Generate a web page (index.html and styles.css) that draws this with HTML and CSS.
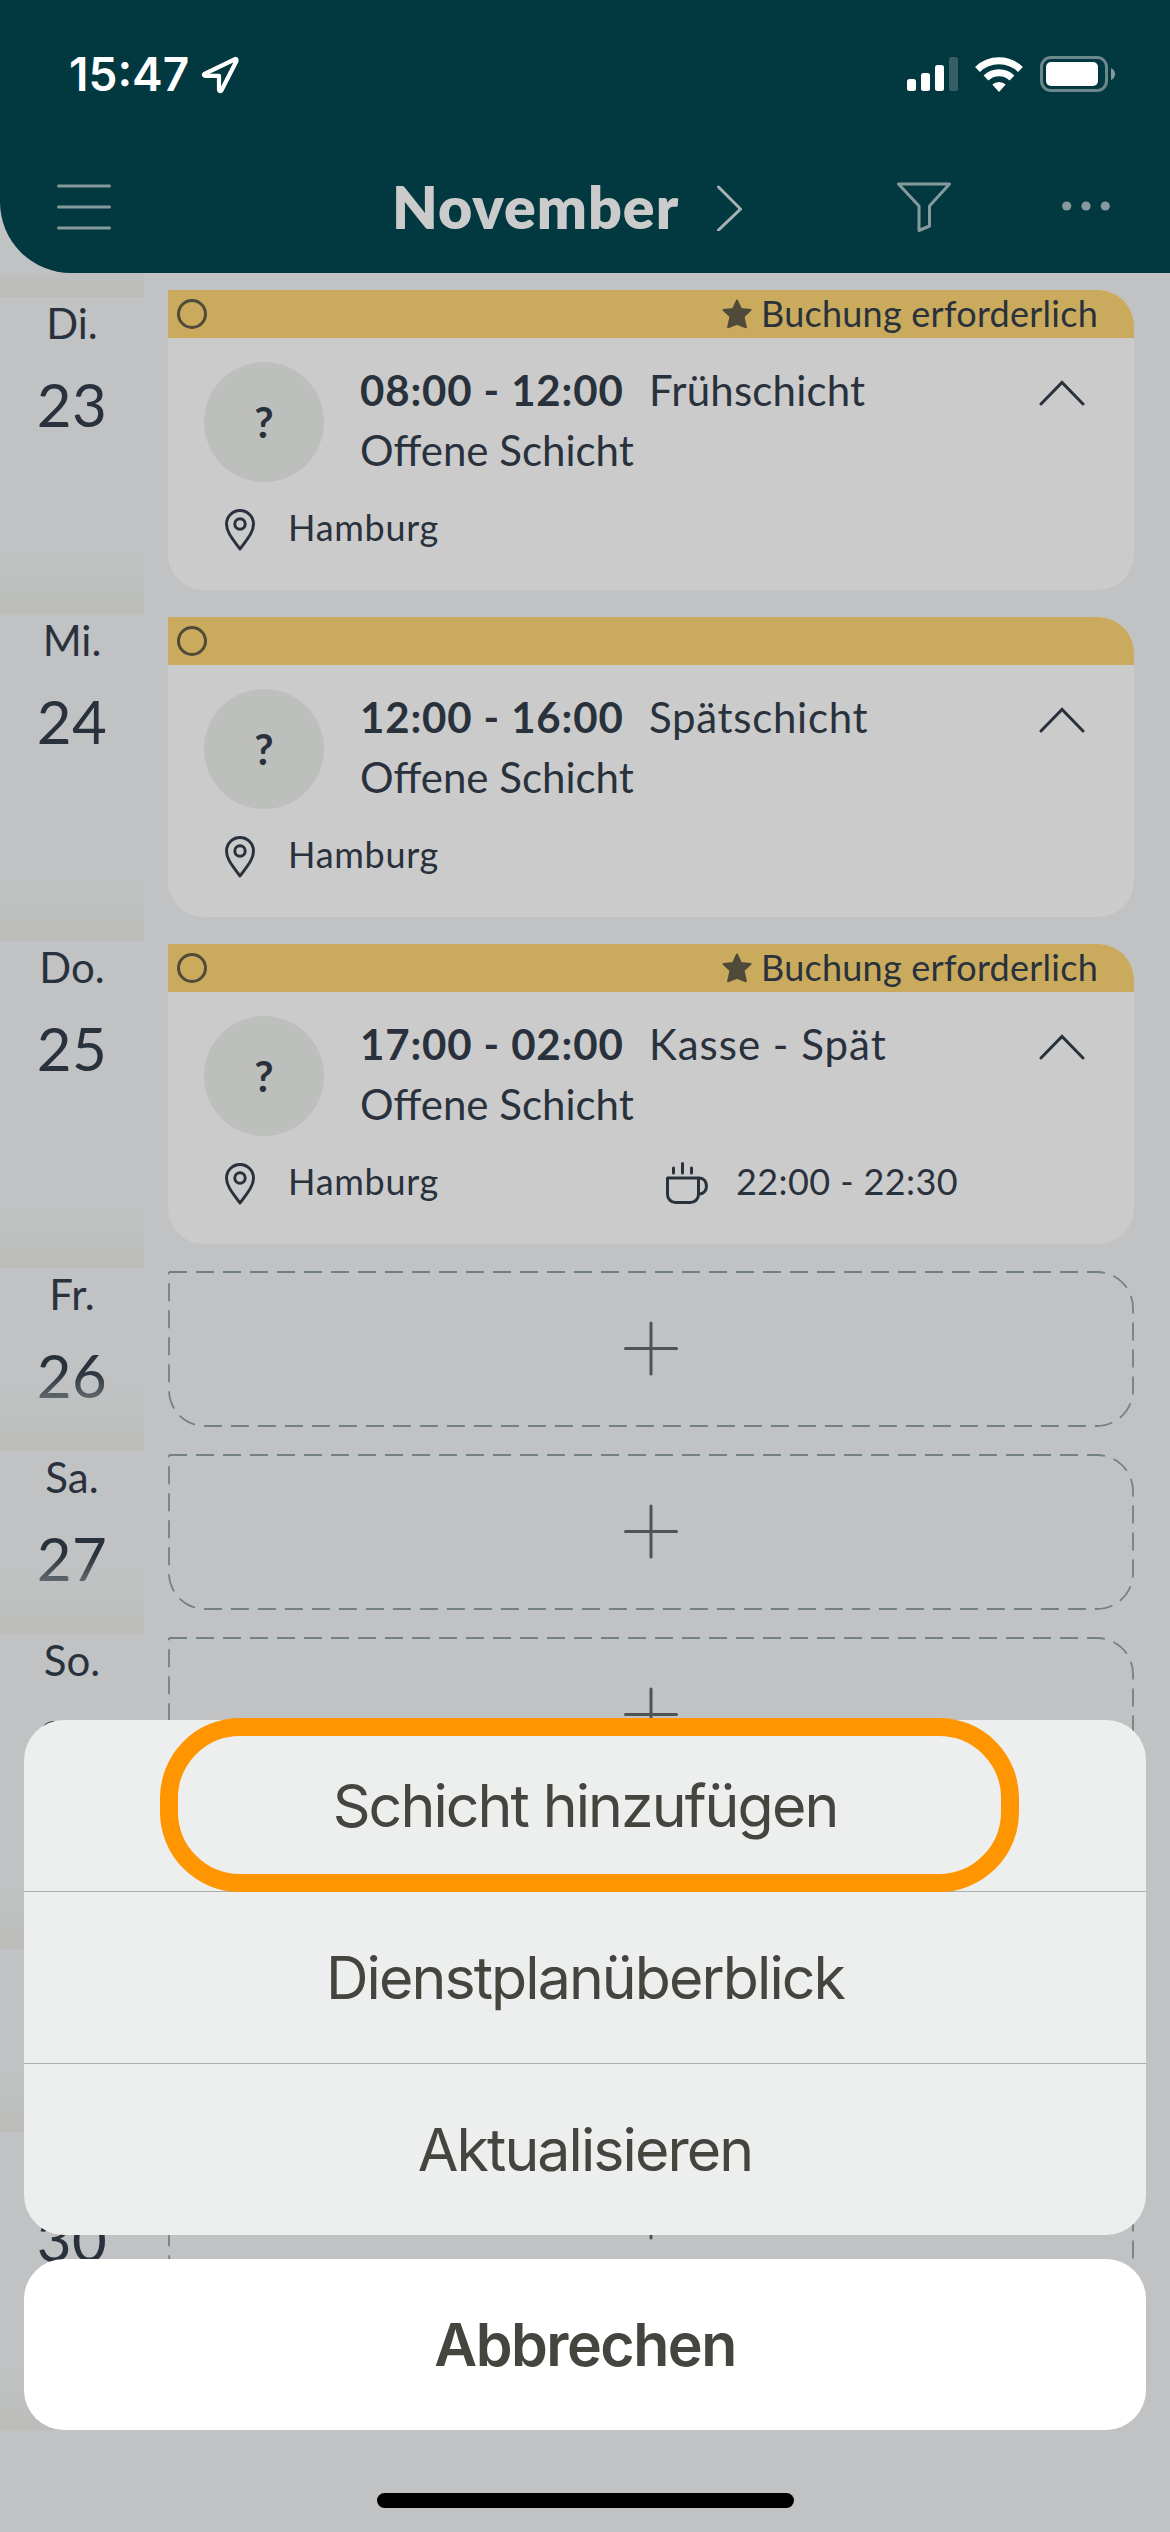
FILE: index.html
```html
<!DOCTYPE html>
<html lang="de">
<head>
    <meta charset="UTF-8">
    <meta name="viewport" content="width=device-width, initial-scale=1.0">
    <title>Dienstplan</title>
    <link rel="stylesheet" href="styles.css">
</head>
<body>
    <!-- Icons -->
    <svg class="icon-defs" width="0" height="0">
        <symbol id="icon-star" viewBox="0 0 30 30">
            <path d="M15 1.500l3.900 8.400 9.600 1-7 6.600 2.400 10.700-8.900-3.400-8.900 3.400 2.400-10.700-7-6.600 9.600-1z" fill="#4f4a39" stroke="#4f4a39" stroke-width="2" stroke-linejoin="round"/>
        </symbol>
        <symbol id="icon-up" viewBox="0 0 46 26">
            <path d="M2 24L23 2.500 44 24" fill="none" stroke="#29323c" stroke-width="3" stroke-linecap="round"/>
        </symbol>
        <symbol id="icon-pin" viewBox="0 0 30 42">
            <path d="M15 40C9 31.500 1.500 24 1.500 15a13.500 13.500 0 0 1 27 0C28.500 24 21 31.500 15 40z" fill="none" stroke="#29323c" stroke-width="3" stroke-linejoin="round"/>
            <circle cx="15" cy="15" r="5.200" fill="none" stroke="#29323c" stroke-width="3"/>
        </symbol>
        <symbol id="icon-cup" viewBox="0 0 42 42">
            <path d="M1.500 16h31v16.500a8 8 0 0 1-8 8h-15a8 8 0 0 1-8-8zM32.500 16h1a7 8 0 0 1 0 16h-1M7.500 6v5M16.500 1.500V11M25.500 6v5" fill="none" stroke="#29323c" stroke-width="3" stroke-linecap="round" stroke-linejoin="round"/>
        </symbol>
        <symbol id="icon-empty" viewBox="0 0 966 156">
            <path d="M1 1H929A36 36 0 0 1 965 37V119A36 36 0 0 1 929 155H37A36 36 0 0 1 1 119V1" fill="none" stroke="#74827f" stroke-width="1.800" stroke-dasharray="18 9"/>
            <path d="M483 52v51M457.500 77.500h51" stroke="#505254" stroke-width="3" stroke-linecap="round"/>
        </symbol>
    </svg>

    <div class="phone">
        <!-- Kopfbereich -->
        <header class="header">
            <div class="status">
                <span class="clock">15:47</span>
                <svg class="location" width="38" height="38" viewBox="0 0 38 38">
                    <path d="M34.500 3L3.500 17.800q-1.500 1.400.5 2H18v14q.8 2.500 2.500.5L35.500 5q.3-2.200-1-2z" fill="none" stroke="#fff" stroke-width="4.200" stroke-linejoin="round"/>
                </svg>
                <svg class="signal" width="52" height="36" viewBox="0 0 52 36">
                    <g fill="#fff">
                        <rect x="0" y="23" width="9" height="12" rx="2.500"/>
                        <rect x="14" y="17" width="9" height="18" rx="2.500"/>
                        <rect x="28" y="9" width="9" height="26" rx="2.500"/>
                        <rect x="42" y="1" width="9" height="34" rx="2.500" opacity=".2"/>
                    </g>
                </svg>
                <svg class="wifi" width="48" height="36" viewBox="0 0 48 36">
                    <path d="M2.500 13.500a31 31 0 0 1 43 0M11 22a18.700 18.700 0 0 1 26 0" fill="none" stroke="#fff" stroke-width="7"/>
                    <path d="M17.300 28.500a10 10 0 0 1 13.400 0L24 36z" fill="#fff"/>
                </svg>
                <svg width="76" height="36" viewBox="0 0 76 36">
                    <rect x="1.500" y="1.500" width="65" height="33" rx="9.500" fill="none" stroke="#6b888b" stroke-width="3"/>
                    <rect x="6" y="6" width="52" height="24" rx="5" fill="#fff"/>
                    <path d="M71 12q4 2 4 6t-4 6z" fill="#869a9d"/>
                </svg>
            </div>
            <nav class="nav">
                <svg width="54" height="46" viewBox="0 0 54 46">
                    <path d="M1.500 2h51M1.500 23h51M1.500 44h51" stroke="#869a9d" stroke-width="3" stroke-linecap="round"/>
                </svg>
                <h1 class="month">November</h1>
                <svg class="next" width="25" height="46" viewBox="0 0 25 46">
                    <path d="M1.500 2L23.500 24 1.500 45" fill="none" stroke="#a7b2b4" stroke-width="3" stroke-linecap="round"/>
                </svg>
                <svg class="filter" width="54" height="50" viewBox="0 0 54 50">
                    <path d="M1.500 2h51L32.500 24v20L22 48.500V24z" fill="none" stroke="#869a9d" stroke-width="3" stroke-linejoin="round"/>
                </svg>
                <svg width="48" height="12" viewBox="0 0 48 12">
                    <g fill="#869a9d"><circle cx="4.700" cy="5" r="4.600"/><circle cx="24" cy="5" r="4.600"/><circle cx="43.300" cy="5" r="4.600"/></g>
                </svg>
            </nav>
        </header>

        <!-- Tagesliste -->
        <main class="days">
            <div class="previous"></div>
            <section class="day first">
                <div class="date"><span class="weekday">Di.</span><span class="number">23</span></div>
                <article class="card">
                    <div class="strip">
                        <span class="ring"></span>
                        <svg class="star"><use href="#icon-star"/></svg>
                        <span class="booking">Buchung erforderlich</span>
                    </div>
                    <div class="body">
                        <div class="shift">
                            <span class="avatar">?</span>
                            <div class="info">
                                <p><strong class="time">08:00 - 12:00</strong><span class="name">Frühschicht</span></p>
                                <p class="open">Offene Schicht</p>
                            </div>
                            <svg class="toggle"><use href="#icon-up"/></svg>
                        </div>
                        <div class="details">
                            <svg class="pin"><use href="#icon-pin"/></svg>
                            <span class="place">Hamburg</span>
                        </div>
                    </div>
                </article>
            </section>

            <section class="day">
                <div class="date"><span class="weekday">Mi.</span><span class="number">24</span></div>
                <article class="card">
                    <div class="strip">
                        <span class="ring"></span>
                    </div>
                    <div class="body">
                        <div class="shift">
                            <span class="avatar">?</span>
                            <div class="info">
                                <p><strong class="time">12:00 - 16:00</strong><span class="name late">Spätschicht</span></p>
                                <p class="open">Offene Schicht</p>
                            </div>
                            <svg class="toggle"><use href="#icon-up"/></svg>
                        </div>
                        <div class="details">
                            <svg class="pin"><use href="#icon-pin"/></svg>
                            <span class="place">Hamburg</span>
                        </div>
                    </div>
                </article>
            </section>

            <section class="day">
                <div class="date"><span class="weekday">Do.</span><span class="number">25</span></div>
                <article class="card">
                    <div class="strip">
                        <span class="ring"></span>
                        <svg class="star"><use href="#icon-star"/></svg>
                        <span class="booking">Buchung erforderlich</span>
                    </div>
                    <div class="body">
                        <div class="shift">
                            <span class="avatar">?</span>
                            <div class="info">
                                <p><strong class="time">17:00 - 02:00</strong><span class="name checkout">Kasse - Spät</span></p>
                                <p class="open">Offene Schicht</p>
                            </div>
                            <svg class="toggle"><use href="#icon-up"/></svg>
                        </div>
                        <div class="details">
                            <svg class="pin"><use href="#icon-pin"/></svg>
                            <span class="place">Hamburg</span>
                            <svg class="cup"><use href="#icon-cup"/></svg>
                            <span class="break">22:00 - 22:30</span>
                        </div>
                    </div>
                </article>
            </section>

            <!-- Freie Tage -->
            <section class="day free">
                <div class="date"><span class="weekday">Fr.</span><span class="number">26</span></div>
                <svg class="empty"><use href="#icon-empty"/></svg>
            </section>
            <section class="day free">
                <div class="date"><span class="weekday">Sa.</span><span class="number">27</span></div>
                <svg class="empty"><use href="#icon-empty"/></svg>
            </section>
            <section class="day free week-end">
                <div class="date"><span class="weekday">So.</span><span class="number">28</span></div>
                <svg class="empty"><use href="#icon-empty"/></svg>
            </section>
            <section class="day free">
                <div class="date"><span class="weekday">Mo.</span><span class="number">29</span></div>
                <svg class="empty"><use href="#icon-empty"/></svg>
            </section>
            <section class="day free last">
                <div class="date"><span class="weekday">Di.</span><span class="number">30</span></div>
                <svg class="empty"><use href="#icon-empty"/></svg>
            </section>
        </main>

        <!-- Aktionsmenü -->
        <div class="sheet">
            <div class="actions">
                <button class="action">Schicht hinzufügen</button>
                <button class="action overview">Dienstplanüberblick</button>
                <button class="action refresh">Aktualisieren</button>
                <div class="highlight"></div>
            </div>
            <button class="action cancel">Abbrechen</button>
            <div class="home"></div>
        </div>
    </div>
</body>
</html>
```
FILE: styles.css
```css
* {
    margin: 0;
    padding: 0;
    box-sizing: border-box;
}

body {
    font-family: Lato, "Open Sans", sans-serif;
    background: #c1c2c4;
    color: #29323c;
}

svg {
    display: block;
    flex: none;
}

.icon-defs {
    position: absolute;
}

.phone {
    position: relative; /* Bezug für das Aktionsmenü */
    width: 1170px;
    height: 2532px;
    overflow: hidden;
}

/* Kopfbereich */
.header {
    height: 273px;
    background: #023840;
    border-bottom-left-radius: 71px;
}

.status {
    display: flex;
    align-items: center;
    height: 148px;
    padding: 0 54px 0 69px;
}

.clock {
    width: 132px;
    font-family: Inter, sans-serif;
    font-size: 46px;
    font-weight: 600;
    color: #fff;
}

.location {
    margin-top: 2px;
}

.signal {
    margin-left: auto;
}

.wifi {
    margin: 0 17px 0 16px;
}

.nav {
    display: flex;
    align-items: center;
    height: 118px;
    padding-left: 57px;
}

.month {
    width: 290px;
    margin: -2px 0 0 281px;
    font-size: 59px;
    font-weight: 800;
    letter-spacing: 1px;
    white-space: nowrap;
    color: #cbcbcb;
}

.next {
    margin: 2px 0 0 35px;
}

.filter {
    margin: 0 111px 0 155px;
}

/* Tagesliste */
.previous {
    width: 144px;
    height: 24px;
    margin-bottom: -10px;
    background: linear-gradient(#bebfbe, #bcbdb9);
}

.day {
    display: flex;
    height: 327px;
}

.date {
    position: relative; /* Verlauf liegt über der Zahl */
    display: flex;
    flex-direction: column;
    width: 144px;
    margin-right: 24px;
    text-align: center;
}

.date::after {
    content: "";
    position: absolute;
    inset: auto 0 0;
    height: 80px;
    background: linear-gradient(rgba(188, 194, 196, 0), rgba(188, 192, 190, 0.6) 55%, #bcbdb9);
}

.first .date {
    padding-top: 10px;
}

.weekday {
    font-size: 42px;
    line-height: 52px;
}

.number {
    margin-top: 19px;
    font-size: 60px;
    line-height: 72px;
    letter-spacing: 0.5px;
}

.card {
    width: 966px;
    height: 300px;
    margin-top: 3px;
    background: #cbcbcb;
    border-radius: 0 36px 36px 36px;
    overflow: hidden;
}

.strip {
    display: flex;
    align-items: center;
    height: 48px;
    padding: 0 39px 0 9px;
    background: #caab5e;
}

.ring {
    width: 30px;
    height: 30px;
    border: 3px solid #4f4a39;
    border-radius: 50%;
}

.star {
    width: 30px;
    height: 30px;
    margin-left: auto;
}

.booking {
    width: 338px;
    margin: -3px -4px 0 9px;
    font-size: 36px;
    line-height: 48px;
    letter-spacing: 0.25px;
    white-space: nowrap;
}

.body {
    padding: 24px 36px;
}

.shift {
    display: flex;
    height: 120px;
}

.avatar {
    width: 120px;
    height: 120px;
    background: #bcbfbb;
    border-radius: 50%;
    font-size: 42px;
    font-weight: 700;
    line-height: 120px;
    text-align: center;
}

.info {
    margin: -2px 0 0 36px;
    font-size: 42px;
    line-height: 60px;
    white-space: nowrap;
}

.info p {
    display: flex;
}

.time {
    width: 289px;
    letter-spacing: 0.85px;
}

.name {
    letter-spacing: 0.2px;
}

.late {
    letter-spacing: 0.7px;
}

.checkout {
    letter-spacing: 1px;
}

.toggle {
    width: 46px;
    height: 26px;
    margin: 18px 13px 0 auto;
}

.details {
    display: flex;
    height: 48px;
    margin-top: 21px;
    padding-left: 21px;
    font-size: 36px;
    line-height: 48px;
    white-space: nowrap;
}

.pin {
    width: 30px;
    height: 42px;
    margin: 6px 33px 0 0;
}

.place {
    width: 378px;
    letter-spacing: 0.7px;
}

.cup {
    width: 42px;
    height: 42px;
    margin: 5px 28px 0 0;
}

.break {
    letter-spacing: 0.4px;
}

/* Freie Tage */
.free {
    height: 183px;
}

.week-end {
    height: 315px;
}

.last {
    height: 298px;
}

.empty {
    width: 966px;
    height: 156px;
    margin-top: 3px;
}

/* Aktionsmenü */
.sheet {
    position: absolute;
    top: 1720px;
    left: 24px;
    right: 24px;
}

.actions {
    position: relative; /* Bezug für die Markierung */
    background: #edefee;
    border-radius: 40px;
}

.action {
    display: block;
    width: 100%;
    height: 171px;
    background: none;
    border: none;
    font-family: Inter, sans-serif;
    font-size: 59px;
    letter-spacing: -1.9px;
    color: #45443f;
}

.overview,
.refresh {
    height: 172px;
    border-top: 1px solid #acaeae;
}

.highlight {
    position: absolute;
    top: -2px;
    left: 136px;
    width: 859px;
    height: 174px;
    border: 18px solid #ff9500;
    border-radius: 80px;
}

.cancel {
    margin-top: 24px;
    background: #fff;
    border-radius: 40px;
    font-weight: 600;
    letter-spacing: -1.5px;
}

.home {
    width: 417px;
    height: 15px;
    margin: 63px auto 0;
    background: #000;
    border-radius: 8px;
}
```
